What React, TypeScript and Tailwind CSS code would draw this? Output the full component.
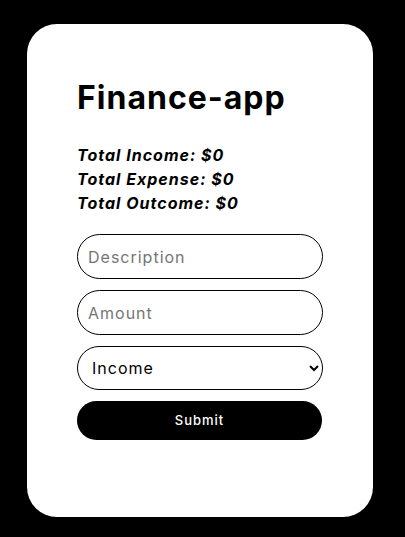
import { useState } from "react";

function App() {
  const [description, setDescription] = useState("");
  const [amount, setAmount] = useState("");
  const [type, setType] = useState("income");

  return (
    <div className="min-h-[537px] w-full bg-black pt-[24px] pl-[27px] font-['Inter',sans-serif]">
      <div className="flex h-[493px] w-[346px] flex-col rounded-[30px] bg-white px-[50px] pt-[54px]">
        <h1 className="text-[32px] font-bold leading-[40px] tracking-[1px] text-black">Finance-app</h1>
        <div className="mt-[25px] flex flex-col text-[16px] font-bold italic leading-[24px] tracking-[1px] text-black">
          <p>Total Income: $0</p>
          <p>Total Expense: $0</p>
          <p>Total Outcome: $0</p>
        </div>
        <form className="mt-[19px] flex flex-col gap-[11px]" onSubmit={(e) => e.preventDefault()}>
          <input
            type="text"
            placeholder="Description"
            value={description}
            onChange={(e) => setDescription(e.target.value)}
            className="h-[45px] w-[246px] rounded-full border border-black px-[10px] text-[16px] tracking-[1px] text-black outline-none placeholder:text-[#757575]"
          />
          <input
            type="number"
            placeholder="Amount"
            value={amount}
            onChange={(e) => setAmount(e.target.value)}
            className="h-[45px] w-[246px] rounded-full border border-black px-[10px] text-[16px] tracking-[1px] text-black outline-none placeholder:text-[#757575]"
          />
          <select
            value={type}
            onChange={(e) => setType(e.target.value)}
            className="h-[44px] w-[246px] rounded-full border border-black bg-white px-[10px] text-[16px] tracking-[1px] text-black outline-none"
          >
            <option value="income">Income</option>
            <option value="expense">Expense</option>
          </select>
          <button
            type="submit"
            className="h-[39px] w-[245px] rounded-full bg-black text-[13px] font-medium tracking-[1px] text-white"
          >
            Submit
          </button>
        </form>
      </div>
    </div>
  );
}

export default App;
